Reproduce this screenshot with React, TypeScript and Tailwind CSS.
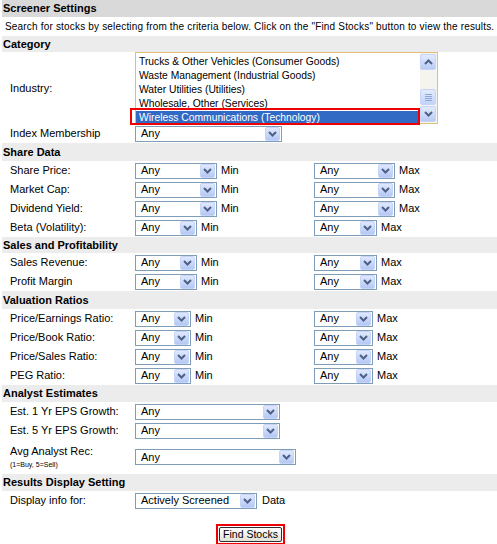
import React from 'react';

const FONT = { fontFamily: '"Liberation Sans", Arial, sans-serif' };

function Arrow() {
  return (
    <div className="flex h-[14px] w-[15px] shrink-0 items-center justify-center rounded-[2px] border border-[#c6d5f7] bg-gradient-to-b from-[#dfe8fe] to-[#b5c8f4]">
      <svg width="9" height="6" viewBox="0 0 9 6">
        <path d="M1 1 L4.5 4.5 L8 1" fill="none" stroke="#4d6185" strokeWidth="2" />
      </svg>
    </div>
  );
}

function Select({ w, value = 'Any', h = 'h-[16px]' }: { w: string; value?: string; h?: string }) {
  return (
    <div className={`${w} ${h} flex shrink-0 items-center border border-[#7f9db9] bg-white pr-[1px]`}>
      <span className="flex-1 truncate pl-[5px] text-[11px] leading-none text-black">{value}</span>
      <Arrow />
    </div>
  );
}

function Section({ title, h = 'h-[17px]' }: { title: string; h?: string }) {
  return (
    <div className={`${h} ml-[2px] flex items-center bg-[#ececec] pl-[1px] text-[11px] font-bold text-black`}>
      {title}
    </div>
  );
}

function Label({ children }: { children: React.ReactNode }) {
  return <div className="w-[135px] shrink-0 pl-[10px] text-[11px] text-black">{children}</div>;
}

function RangeRow({ label, minW, maxW }: { label: string; minW: string; maxW: string }) {
  return (
    <div className="flex h-[19px] items-center">
      <Label>{label}</Label>
      <div className="flex w-[179px] shrink-0 items-center gap-[4px]">
        <Select w={minW} />
        <span className="text-[11px] text-black">Min</span>
      </div>
      <div className="flex items-center gap-[4px]">
        <Select w={maxW} />
        <span className="text-[11px] text-black">Max</span>
      </div>
    </div>
  );
}

function ScrollBtn({ up }: { up?: boolean }) {
  return (
    <div className="flex h-[16px] w-[16px] items-center justify-center rounded-[2px] border border-[#c6d5f7] bg-gradient-to-b from-[#e2ebfe] to-[#b9cbf4]">
      <svg width="9" height="6" viewBox="0 0 9 6">
        <path d={up ? 'M1 5 L4.5 1.5 L8 5' : 'M1 1 L4.5 4.5 L8 1'} fill="none" stroke="#4d6185" strokeWidth="2" />
      </svg>
    </div>
  );
}

const industries = [
  'Trucks & Other Vehicles (Consumer Goods)',
  'Waste Management (Industrial Goods)',
  'Water Utilities (Utilities)',
  'Wholesale, Other (Services)',
];

export default function App() {
  return (
    <div className="relative h-[544px] w-[497px] overflow-hidden bg-white" style={FONT}>
      <div className="ml-[2px] flex h-[17px] items-center bg-[#d9d9d9] pl-[1px] text-[11px] font-bold text-black">
        Screener Settings
      </div>
      <div className="flex h-[19px] items-center whitespace-nowrap pl-[5px] text-[10px] tracking-[0.18px] text-black">
        Search for stocks by selecting from the criteria below. Click on the "Find Stocks" button to view the results.
      </div>
      <Section title="Category" h="h-[16px]" />

      <div className="flex h-[72px] items-center">
        <Label>Industry:</Label>
        <div className="relative flex h-[72px] w-[303px] border border-[#e2bf77] bg-white">
          <div className="flex flex-1 flex-col pt-[2px]">
            {industries.map((s) => (
              <div key={s} className="h-[14px] pl-[3px] text-[10.3px] leading-[14px] text-black">
                {s}
              </div>
            ))}
            <div className="h-[14px] bg-[#316ac5] pl-[3px] text-[10.3px] leading-[14px] text-white">
              Wireless Communications (Technology)
            </div>
          </div>
          <div className="flex w-[17px] flex-col bg-[#f6f4ef] py-[1px]">
            <ScrollBtn up />
            <div className="flex-1" />
            <div className="mb-[1px] flex h-[16px] w-[16px] flex-col items-center justify-center gap-[1px] rounded-[2px] border border-[#c6d5f7] bg-gradient-to-b from-[#e2ebfe] to-[#c3d3f8]">
              <div className="h-px w-[7px] bg-[#8ea6d8]" />
              <div className="h-px w-[7px] bg-[#8ea6d8]" />
              <div className="h-px w-[7px] bg-[#8ea6d8]" />
              <div className="h-px w-[7px] bg-[#8ea6d8]" />
            </div>
            <ScrollBtn />
          </div>
        </div>
      </div>
      <div className="pointer-events-none absolute left-[130px] top-[108px] h-[17px] w-[290px] border-2 border-[#ee0000]" />

      <div className="flex h-[19px] items-center">
        <Label>Index Membership</Label>
        <Select w="w-[147px]" />
      </div>

      <Section title="Share Data" h="h-[18px]" />
      <RangeRow label="Share Price:" minW="w-[82px]" maxW="w-[81px]" />
      <RangeRow label="Market Cap:" minW="w-[82px]" maxW="w-[81px]" />
      <RangeRow label="Dividend Yield:" minW="w-[82px]" maxW="w-[81px]" />
      <RangeRow label="Beta (Volatility):" minW="w-[62px]" maxW="w-[63px]" />

      <Section title="Sales and Profitability" h="h-[16px]" />
      <RangeRow label="Sales Revenue:" minW="w-[62px]" maxW="w-[63px]" />
      <RangeRow label="Profit Margin" minW="w-[62px]" maxW="w-[63px]" />

      <Section title="Valuation Ratios" h="h-[18px]" />
      <RangeRow label="Price/Earnings Ratio:" minW="w-[56px]" maxW="w-[59px]" />
      <RangeRow label="Price/Book Ratio:" minW="w-[56px]" maxW="w-[59px]" />
      <RangeRow label="Price/Sales Ratio:" minW="w-[56px]" maxW="w-[59px]" />
      <RangeRow label="PEG Ratio:" minW="w-[56px]" maxW="w-[59px]" />

      <Section title="Analyst Estimates" />
      <div className="flex h-[19px] items-center">
        <Label>Est. 1 Yr EPS Growth:</Label>
        <Select w="w-[145px]" />
      </div>
      <div className="flex h-[19px] items-center">
        <Label>Est. 5 Yr EPS Growth:</Label>
        <Select w="w-[145px]" />
      </div>
      <div className="flex h-[34px] items-center">
        <div className="flex w-[135px] shrink-0 flex-col pl-[10px] pt-[2px]">
          <span className="text-[11px] leading-[14px] text-black">Avg Analyst Rec:</span>
          <span className="text-[7px] leading-[14px] text-black">(1=Buy, 5=Sell)</span>
        </div>
        <Select w="w-[161px]" />
      </div>

      <Section title="Results Display Setting" />
      <div className="flex h-[19px] items-center">
        <Label>Display info for:</Label>
        <Select w="w-[122px]" value="Actively Screened" />
        <span className="ml-[5px] text-[11px] text-black">Data</span>
      </div>

      <div className="flex justify-center pl-[4px] pt-[14px]">
        <div className="border-2 border-[#ee0000] p-[1px]">
          <button className="flex h-[15px] items-center rounded-[2px] border border-[#2e2e2e] bg-gradient-to-b from-[#ffffff] to-[#e3e1d6] px-[3px] pb-[1px] text-[10.5px] leading-none text-black">
            Find Stocks
          </button>
        </div>
      </div>
    </div>
  );
}
